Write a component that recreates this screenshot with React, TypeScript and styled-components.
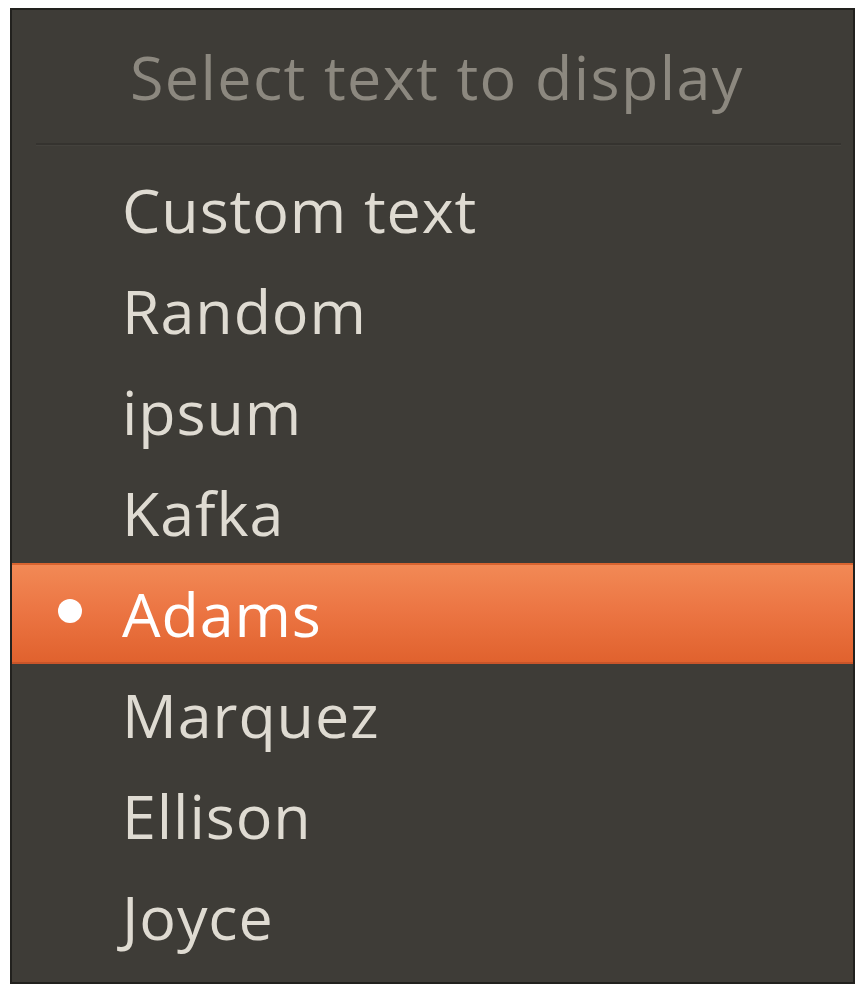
import React from "react";
import styled, { createGlobalStyle } from "styled-components";

const Global = createGlobalStyle`
  html, body { margin: 0; padding: 0; background: #ffffff; }
  body { font-family: "Open Sans", "DejaVu Sans", sans-serif; }
`;

const Panel = styled.div`
  box-sizing: border-box;
  margin: 8px 0 0 10px;
  width: 845px;
  height: 976px;
  background: #3e3c37;
  border: 2px solid #22211e;
  display: flex;
  flex-direction: column;
`;

const Header = styled.div`
  padding: 26px 0 0 118px;
  line-height: 82px;
  font-size: 61px;
  letter-spacing: 1.4px;
  color: #8c887f;
`;

const Separator = styled.div`
  margin: 25px 12px 13px 24px;
  height: 2px;
  background: #35332f;
  border-bottom: 1px solid #44423d;
`;

const Row = styled.div<{ $active?: boolean }>`
  height: 101px;
  display: grid;
  grid-template-columns: 110px 1fr;
  align-items: center;
  font-size: 61px;
  letter-spacing: 0.9px;
  line-height: 82px;
  color: ${(p) => (p.$active ? "#ffffff" : "#dfdbd2")};
  background: ${(p) =>
    p.$active
      ? "linear-gradient(to bottom, #f28a56 0%, #ec7644 45%, #e0612d 100%)"
      : "transparent"};
  box-shadow: ${(p) => (p.$active ? "inset 0 2px 0 #d86430, inset 0 -2px 0 #c9552a" : "none")};
`;

const BulletSlot = styled.div`
  display: flex;
  justify-content: flex-end;
  padding-right: 40px;
`;

const Bullet = styled.span`
  width: 24px;
  height: 24px;
  border-radius: 50%;
  background: #ffffff;
  margin-top: -6px;
`;

const Label = styled.span`
  white-space: nowrap;
`;

const items = ["Custom text", "Random", "ipsum", "Kafka", "Adams", "Marquez", "Ellison", "Joyce"];
const selected = "Adams";

export default function App() {
  return (
    <>
      <Global />
      <Panel>
        <Header>Select text to display</Header>
        <Separator />
        {items.map((it) => (
          <Row key={it} $active={it === selected}>
            <BulletSlot>{it === selected && <Bullet />}</BulletSlot>
            <Label>{it}</Label>
          </Row>
        ))}
      </Panel>
    </>
  );
}
